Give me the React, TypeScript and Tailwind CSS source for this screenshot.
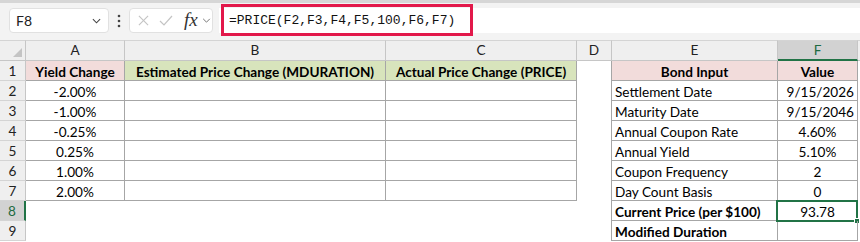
import React from "react";

const yieldChanges = ["-2.00%", "-1.00%", "-0.25%", "0.25%", "1.00%", "2.00%"];

const bondRows: { label: string; value: string; align: "right" | "center"; bold?: boolean }[] = [
  { label: "Settlement Date", value: "9/15/2026", align: "right" },
  { label: "Maturity Date", value: "9/15/2046", align: "right" },
  { label: "Annual Coupon Rate", value: "4.60%", align: "center" },
  { label: "Annual Yield", value: "5.10%", align: "center" },
  { label: "Coupon Frequency", value: "2", align: "center" },
  { label: "Day Count Basis", value: "0", align: "center" },
  { label: "Current Price (per $100)", value: "93.78", align: "center", bold: true },
  { label: "Modified Duration", value: "", align: "center", bold: true },
];

const columns = ["A", "B", "C", "D", "E", "F", ""];

function Chevron({ className }: { className?: string }) {
  return (
    <svg viewBox="0 0 10 6" className={className} fill="none" stroke="currentColor" strokeWidth="1.2">
      <polyline points="1,1 5,5 9,1" />
    </svg>
  );
}

function FormulaBar() {
  return (
    <div className="h-[40px] flex flex-col">
      <div className="h-[3px] bg-[#d6d6d6]" />
      <div className="relative flex-1 bg-[#f3f3f3] flex items-start pt-[5px] pl-[9px]">
        <div className="w-[100px] h-[25px] bg-white border border-[#e1e1e1] rounded-[4px] flex items-center justify-between pl-[6px] pr-[7px] text-[14px] text-[#222]">
          <span>F8</span>
          <Chevron className="w-[9px] h-[6px] text-[#444]" />
        </div>
        <svg viewBox="0 0 4 14" className="w-[4px] h-[14px] ml-[8px] mt-[6px] text-[#444]" fill="currentColor">
          <circle cx="2" cy="2" r="1.3" />
          <circle cx="2" cy="7" r="1.3" />
          <circle cx="2" cy="12" r="1.3" />
        </svg>
        <div className="ml-[8px] w-[84px] h-[25px] bg-white border border-[#e1e1e1] rounded-[4px] flex items-center pl-[8px]">
          <svg viewBox="0 0 12 12" className="w-[11px] h-[11px] text-[#c4c4c4]" fill="none" stroke="currentColor" strokeWidth="1.2">
            <line x1="1" y1="1" x2="11" y2="11" />
            <line x1="11" y1="1" x2="1" y2="11" />
          </svg>
          <svg viewBox="0 0 14 11" className="ml-[10px] w-[14px] h-[11px] text-[#c4c4c4]" fill="none" stroke="currentColor" strokeWidth="1.2">
            <polyline points="1,6 5,10 13,1" />
          </svg>
          <span className="ml-[11px] font-['Liberation_Serif'] italic text-[19px] leading-none text-[#333] -mt-[3px]">fx</span>
          <Chevron className="ml-[4px] w-[9px] h-[5px] text-[#777]" />
        </div>
        <div className="ml-[6px] flex-1 h-[25px] bg-white flex items-center pl-[10px] font-['Liberation_Mono'] text-[13px] text-[#111]">
          =PRICE(F2,F3,F4,F5,100,F6,F7)
        </div>
        <div className="absolute left-[221px] top-[1px] w-[252px] h-[32px] border-[3px] border-[#e2184a]" />
      </div>
    </div>
  );
}

function Cell({
  className = "",
  children,
}: {
  className?: string;
  children?: React.ReactNode;
}) {
  return (
    <div className={`h-[20px] flex items-end overflow-hidden leading-[16px] whitespace-nowrap ${className}`}>
      {children}
    </div>
  );
}

export default function App() {
  const tb = "border-r border-b border-[#a6a6a6]";
  return (
    <div className="w-[860px] h-[242px] overflow-hidden bg-white font-['Lato',sans-serif] text-[13.6px] text-black">
      <FormulaBar />
      <div className="grid grid-cols-[26px_99px_261px_191px_35px_166px_80px_1fr]">
        {/* column headers */}
        <div className="h-[21px] bg-[#efefef] border-t border-b border-r border-t-[#d4d4d4] border-b-[#c6c6c6] border-r-[#c6c6c6] relative">
          <svg viewBox="0 0 10 10" className="absolute right-[3px] bottom-[3px] w-[9px] h-[9px] text-[#c4c4c4]" fill="currentColor">
            <polygon points="10,0 10,10 0,10" />
          </svg>
        </div>
        {columns.map((c, i) =>
          c === "F" ? (
            <div
              key={i}
              className="h-[21px] bg-[#d2d2d2] border-t border-t-[#d4d4d4] border-r border-r-[#c6c6c6] border-b-2 border-b-[#217346] flex items-end justify-center pb-[1px] leading-[16px] text-[#1d6b40]"
            >
              {c}
            </div>
          ) : (
            <div
              key={i}
              className={`h-[21px] bg-[#efefef] border-t border-b border-t-[#d4d4d4] border-b-[#c6c6c6] flex items-end justify-center pb-[2px] leading-[16px] text-[#222] ${
                c ? "border-r border-r-[#c6c6c6]" : ""
              }`}
            >
              {c}
            </div>
          )
        )}

        {Array.from({ length: 9 }, (_, idx) => {
          const r = idx + 1;
          const bond = r >= 2 ? bondRows[r - 2] : null;
          const inA = r <= 7;
          return (
            <React.Fragment key={r}>
              {r === 8 ? (
                <Cell className="justify-center bg-[#d2d2d2] border-b border-b-[#d4d4d4] border-r-2 border-r-[#217346] text-[#1d6b40] pb-[1px]">
                  {r}
                </Cell>
              ) : (
                <Cell className="justify-center bg-[#efefef] border-b border-r border-b-[#d4d4d4] border-r-[#c6c6c6] text-[#222] pb-[1px]">
                  {r}
                </Cell>
              )}

              {r === 1 ? (
                <>
                  <Cell className={`justify-center font-bold bg-[#f2dcdb] ${tb}`}>Yield Change</Cell>
                  <Cell className={`justify-center font-bold bg-[#d8e4bc] ${tb}`}>
                    Estimated Price Change (MDURATION)
                  </Cell>
                  <Cell className={`justify-center font-bold bg-[#d8e4bc] ${tb}`}>
                    Actual Price Change (PRICE)
                  </Cell>
                </>
              ) : inA ? (
                <>
                  <Cell className={`justify-center ${tb}`}>{yieldChanges[r - 2]}</Cell>
                  <Cell className={tb} />
                  <Cell className={tb} />
                </>
              ) : (
                <>
                  <Cell />
                  <Cell />
                  <Cell />
                </>
              )}

              <Cell className="border-r border-[#a6a6a6]" />

              {r === 1 ? (
                <>
                  <Cell className={`justify-center font-bold bg-[#f2dcdb] ${tb}`}>Bond Input</Cell>
                  <Cell className={`justify-center font-bold bg-[#f2dcdb] ${tb}`}>Value</Cell>
                </>
              ) : (
                <>
                  <Cell className={`pl-[3px] ${bond?.bold ? "font-bold" : ""} ${tb}`}>{bond?.label}</Cell>
                  <div className="relative">
                    <Cell
                      className={`${bond?.align === "right" ? "justify-end pr-[3px]" : "justify-center"} ${tb}`}
                    >
                      {bond?.value}
                    </Cell>
                    {r === 8 && (
                      <>
                        <div className="absolute -left-[2px] -top-[1px] w-[82px] h-[22px] border-2 border-[#217346]" />
                        <div className="absolute -right-[2px] -bottom-[3px] w-[6px] h-[6px] bg-[#217346] border border-white" />
                      </>
                    )}
                  </div>
                </>
              )}
              <Cell />
            </React.Fragment>
          );
        })}
      </div>
    </div>
  );
}
